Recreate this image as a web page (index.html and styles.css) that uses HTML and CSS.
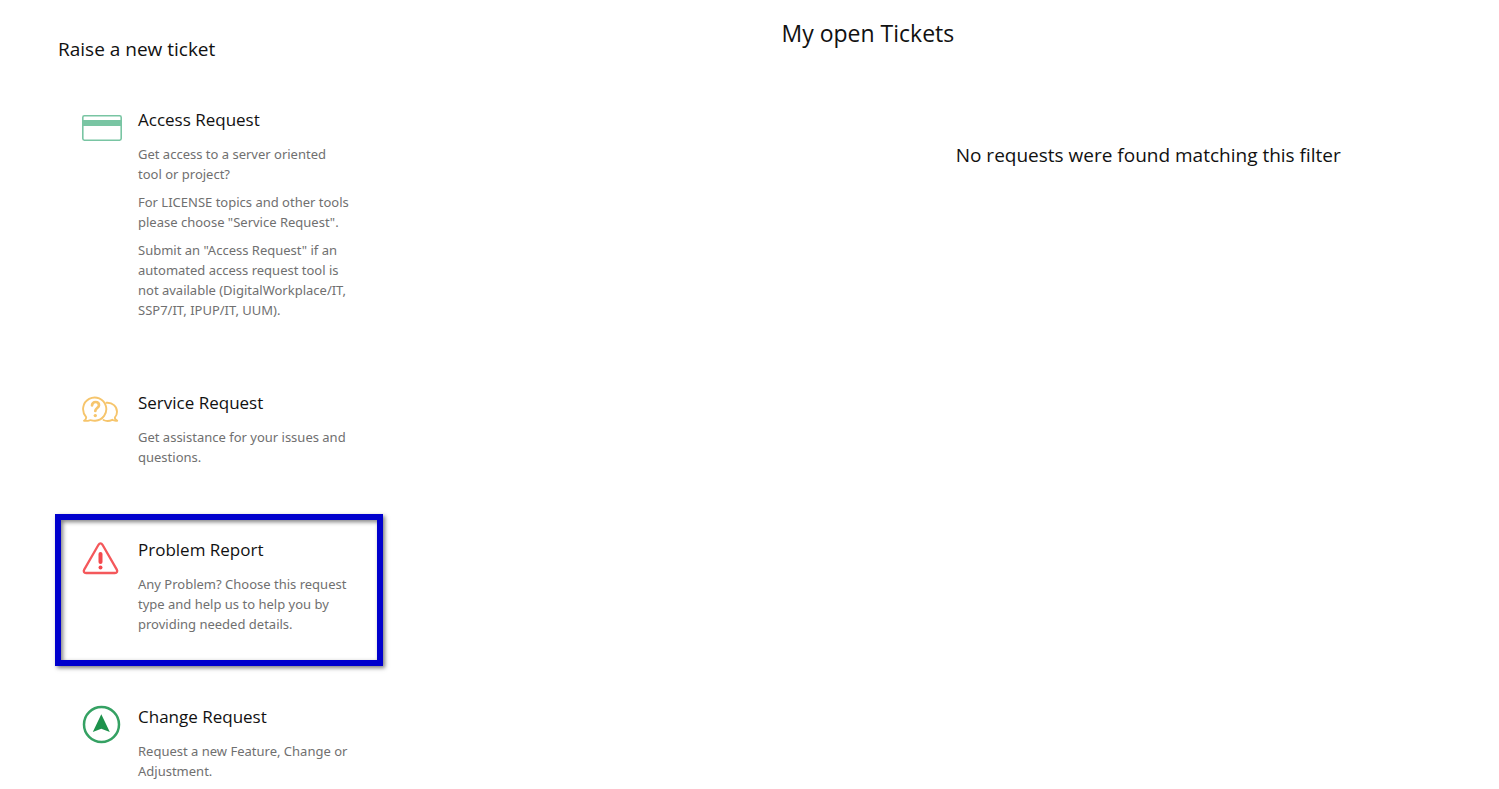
FILE: index.html
```html
<!DOCTYPE html>
<html lang="en">
<head>
<meta charset="utf-8">
<title>Tickets</title>
<link rel="stylesheet" href="styles.css">
</head>
<body>
<main class="page">
  <section class="raise">
    <h2 class="raise-title">Raise a new ticket</h2>
    <ul class="request-list">
      <li>
        <a class="request" href="#access">
          <svg class="icon" viewBox="0 0 40 40" aria-hidden="true">
            <rect x="0.8" y="7.800" width="38.400" height="24.400" rx="1.600" fill="none" stroke="#79c5a3" stroke-width="1.600"/>
            <rect x="0.5" y="12" width="39" height="6" fill="#79c5a3"/>
          </svg>
          <div class="request-body">
            <h3 class="request-title">Access Request</h3>
            <div class="request-text">
              <p>Get access to a server oriented<br>tool or project?</p>
              <p>For LICENSE topics and other tools<br>please choose "Service Request".</p>
              <p>Submit an "Access Request" if an<br>automated access request tool is<br>not available (DigitalWorkplace/IT,<br>SSP7/IT, IPUP/IT, UUM).</p>
            </div>
          </div>
        </a>
      </li>
      <li>
        <a class="request" href="#service">
          <svg class="icon" viewBox="0 0 40 40" fill="none" stroke="#f6c56c" stroke-width="1.900" stroke-linecap="round" stroke-linejoin="round" aria-hidden="true">
            <path d="M2 29.700C4 28.500 4.500 27.300 4 25.800A11.600 11.600 0 1 1 13.300 29.700C9.500 30 9.500 28.500 7.500 29.300C6 29.900 4 30 2 29.700Z"/>
            <path d="M24.500 11.800C30.500 11.300 35 15.500 35 20.800C35 23.200 34.300 25 32.900 26.400C32.700 27.800 33.400 28.900 35.200 29.700C33 30 31.500 29.600 30.300 28.800C28 29.900 24 30.300 21.500 29"/>
            <path stroke-width="2.700" d="M10 14.300C10.500 9.800 17 10 17 14.200C17 17 13.300 17.100 13.300 20"/>
            <circle cx="13.300" cy="24.600" r="1.700" fill="#f6c56c" stroke="none"/>
          </svg>
          <div class="request-body">
            <h3 class="request-title">Service Request</h3>
            <div class="request-text">
              <p>Get assistance for your issues and<br>questions.</p>
            </div>
          </div>
        </a>
      </li>
      <li>
        <a class="request request-selected" href="#problem">
          <svg class="icon" viewBox="0 0 40 40" aria-hidden="true">
            <path d="M16.500 6.800L2.200 31.600C1.200 33.400 2 35 4 35H33C35 35 35.800 33.400 34.800 31.600L20.500 6.800C19.400 5 17.600 5 16.500 6.800Z" fill="none" stroke="#f4585b" stroke-width="2.300"/>
            <path d="M18.500 16V24" stroke="#f4484c" stroke-width="4" stroke-linecap="round"/>
            <circle cx="18.500" cy="29.500" r="2" fill="#f4484c"/>
          </svg>
          <div class="request-body">
            <h3 class="request-title">Problem Report</h3>
            <div class="request-text">
              <p>Any Problem? Choose this request<br>type and help us to help you by<br>providing needed details.</p>
            </div>
          </div>
        </a>
      </li>
      <li>
        <a class="request" href="#change">
          <svg class="icon" viewBox="0 0 40 40" aria-hidden="true">
            <circle cx="19.500" cy="19.500" r="17.500" fill="none" stroke="#35a163" stroke-width="2.500"/>
            <path d="M19.300 9.200L27.800 27L19.300 23.800L10.800 27Z" fill="#1e924c"/>
          </svg>
          <div class="request-body">
            <h3 class="request-title">Change Request</h3>
            <div class="request-text">
              <p>Request a new Feature, Change or<br>Adjustment.</p>
            </div>
          </div>
        </a>
      </li>
    </ul>
  </section>
  <section class="tickets">
    <h1 class="tickets-title">My open Tickets</h1>
    <p class="tickets-empty">No requests were found matching this filter</p>
  </section>
</main>
</body>
</html>
```
FILE: styles.css
```css
* { box-sizing: border-box; }

body {
  margin: 0;
  background: #fff;
  color: #111;
  font-family: "Segoe UI", "Open Sans", sans-serif;
}

h1, h2, h3, p, ul {
  margin: 0;
  padding: 0;
  font-weight: 400;
}

.page {
  display: grid;
  grid-template-columns: 1fr 1fr;
}

.raise { padding: 36px 0 0 55px; }

.raise-title {
  padding-left: 3px;
  font-size: 19px;
  line-height: 26px;
}

.request-list {
  display: flex;
  flex-direction: column;
  gap: 15px;
  max-width: 328px;
  margin-top: 22px;
  list-style: none;
}

.request {
  display: flex;
  gap: 16px;
  padding: 18px 20px 26px 21px;
  border: 6px solid transparent;
  color: inherit;
  text-decoration: none;
}

.request-selected {
  border-color: #0000cd;
  box-shadow: 2px 2px 4px rgba(0, 0, 0, 0.5), inset 2px 2px 4px rgba(0, 0, 0, 0.5);
}

.icon {
  flex: none;
  width: 40px;
  height: 40px;
}

.request-body {
  display: flex;
  flex-direction: column;
  gap: 12px;
  white-space: nowrap;
}

.request-title {
  font-size: 17px;
  line-height: 24px;
}

.request-text {
  display: flex;
  flex-direction: column;
  gap: 8px;
  color: #707070;
  font-family: "Segoe UI", "Noto Sans", sans-serif;
  font-size: 13px;
  line-height: 20px;
}

.tickets { padding: 17px 0 0 32px; }

.tickets-title {
  font-size: 23px;
  line-height: 32px;
}

.tickets-empty {
  padding-left: 16px;
  margin-top: 93px;
  font-size: 19px;
  line-height: 26px;
  text-align: center;
}
```
